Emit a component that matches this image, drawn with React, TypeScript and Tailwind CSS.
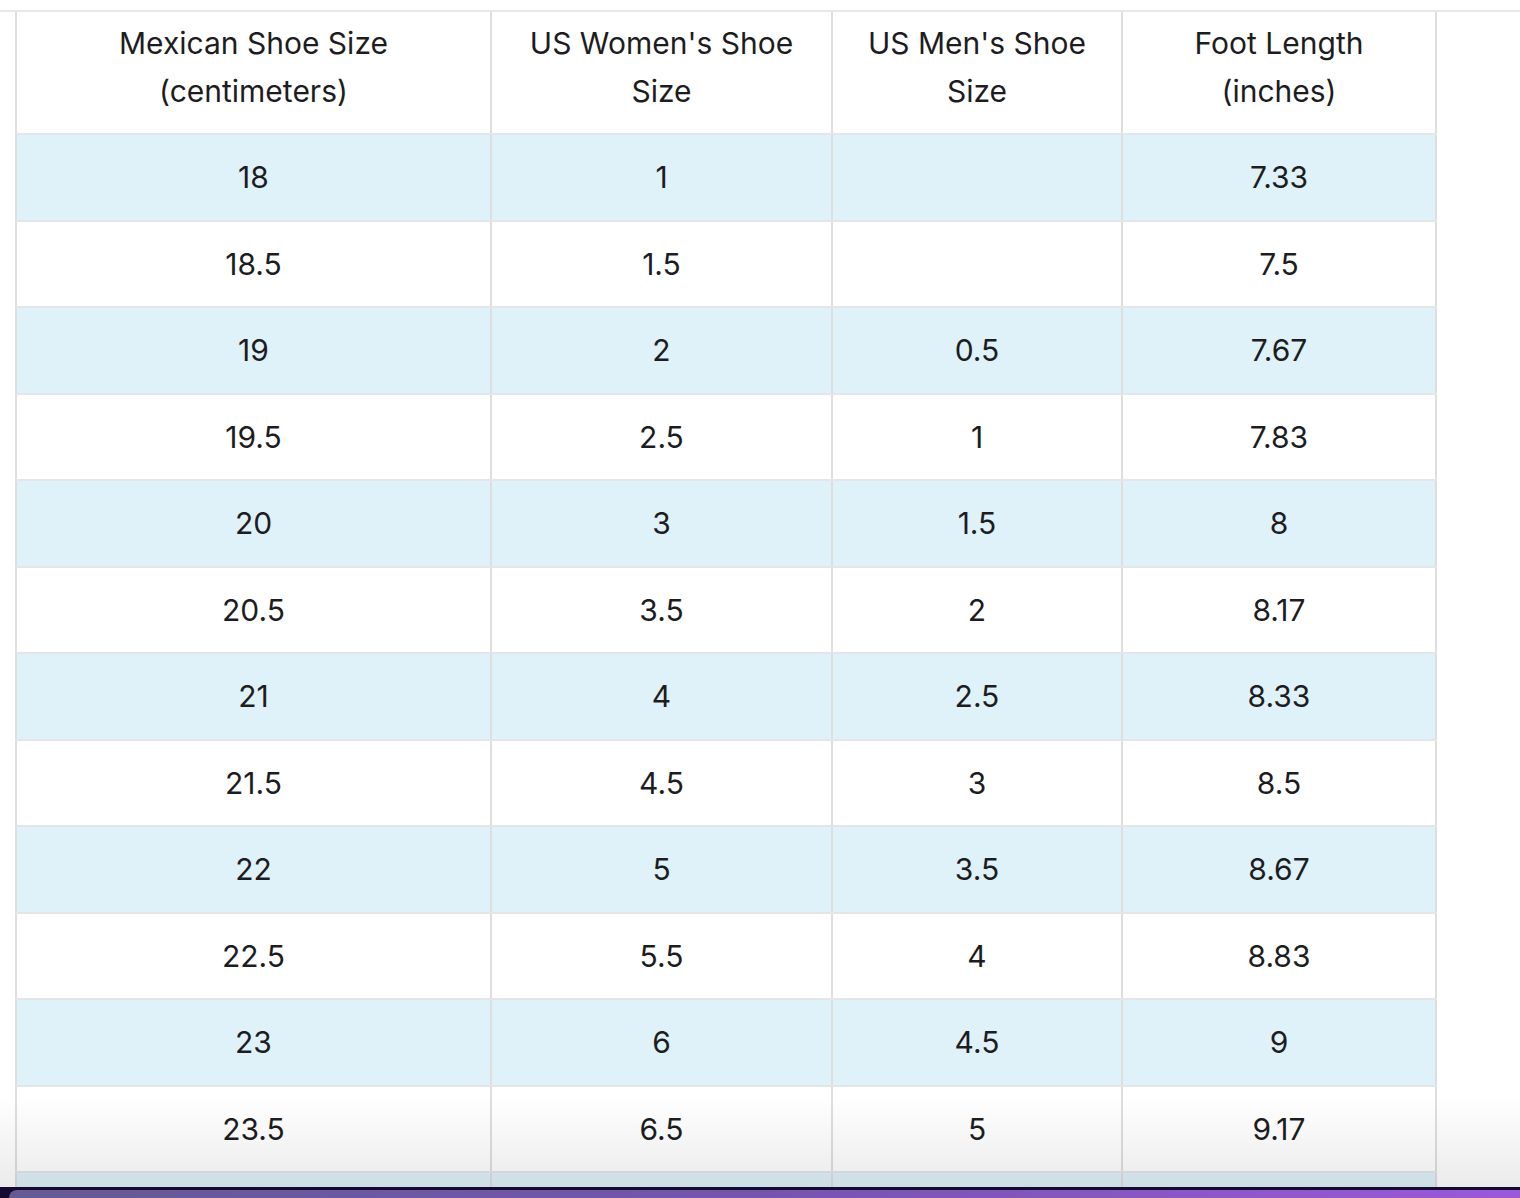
import React from "react";

const rows: [string, string, string, string][] = [
  ["18", "1", "", "7.33"],
  ["18.5", "1.5", "", "7.5"],
  ["19", "2", "0.5", "7.67"],
  ["19.5", "2.5", "1", "7.83"],
  ["20", "3", "1.5", "8"],
  ["20.5", "3.5", "2", "8.17"],
  ["21", "4", "2.5", "8.33"],
  ["21.5", "4.5", "3", "8.5"],
  ["22", "5", "3.5", "8.67"],
  ["22.5", "5.5", "4", "8.83"],
  ["23", "6", "4.5", "9"],
  ["23.5", "6.5", "5", "9.17"],
  ["", "", "", ""],
];

function Row({ r, i }: { r: [string, string, string, string]; i: number }) {
  const blue = i % 2 === 0;
  return (
    <div
      className={`flex shrink-0 border-t-2 border-[#e3e5e8] ${i % 2 === 0 ? "h-[87px]" : "h-[86px]"} ${blue ? "bg-[#dff1f9]" : "bg-white"}`}
    >
      <div className="w-[475px] border-l-2 border-[#dedede] flex items-center justify-center">{r[0]}</div>
      <div className="w-[341px] border-l-2 border-[#dedede] flex items-center justify-center">{r[1]}</div>
      <div className="w-[290px] border-l-2 border-[#dedede] flex items-center justify-center">{r[2]}</div>
      <div className="w-[316px] border-x-2 border-[#dedede] flex items-center justify-center">{r[3]}</div>
    </div>
  );
}

export default function App() {
  return (
    <div
      className="relative w-[1520px] h-[1198px] overflow-hidden bg-white text-[#1d1d1f] text-[30px]"
      style={{ fontFamily: "Inter, 'Open Sans', sans-serif" }}
    >
      <div className="h-[10px]" />
      <div className="h-[2px] bg-[#e6e6ec]" />
      <div className="ml-[15px] w-[1422px] flex flex-col">
        <div className="flex h-[121px] shrink-0 leading-[48px] text-center">
          <div className="w-[475px] border-l-2 border-[#dedede] pt-[7px]">
            Mexican Shoe Size
            <br />
            (centimeters)
          </div>
          <div className="w-[341px] border-l-2 border-[#dedede] pt-[7px]">
            US Women's Shoe
            <br />
            Size
          </div>
          <div className="w-[290px] border-l-2 border-[#dedede] pt-[7px]">
            US Men's Shoe
            <br />
            Size
          </div>
          <div className="w-[316px] border-x-2 border-[#dedede] pt-[7px]">
            Foot Length
            <br />
            (inches)
          </div>
        </div>
        {rows.map((r, i) => (
          <Row key={i} r={r} i={i} />
        ))}
      </div>
      <div className="absolute left-0 right-0 top-[1095px] h-[93px] bg-gradient-to-b from-transparent to-black/[0.08] pointer-events-none" />
      <div className="absolute left-0 right-0 bottom-0 h-[11px] bg-[#150b32] pt-[3px]">
        <div className="ml-[9px] h-full rounded-tl-[16px] bg-gradient-to-r from-[#655a94] via-[#7455ad] to-[#9c58da]" />
      </div>
    </div>
  );
}
